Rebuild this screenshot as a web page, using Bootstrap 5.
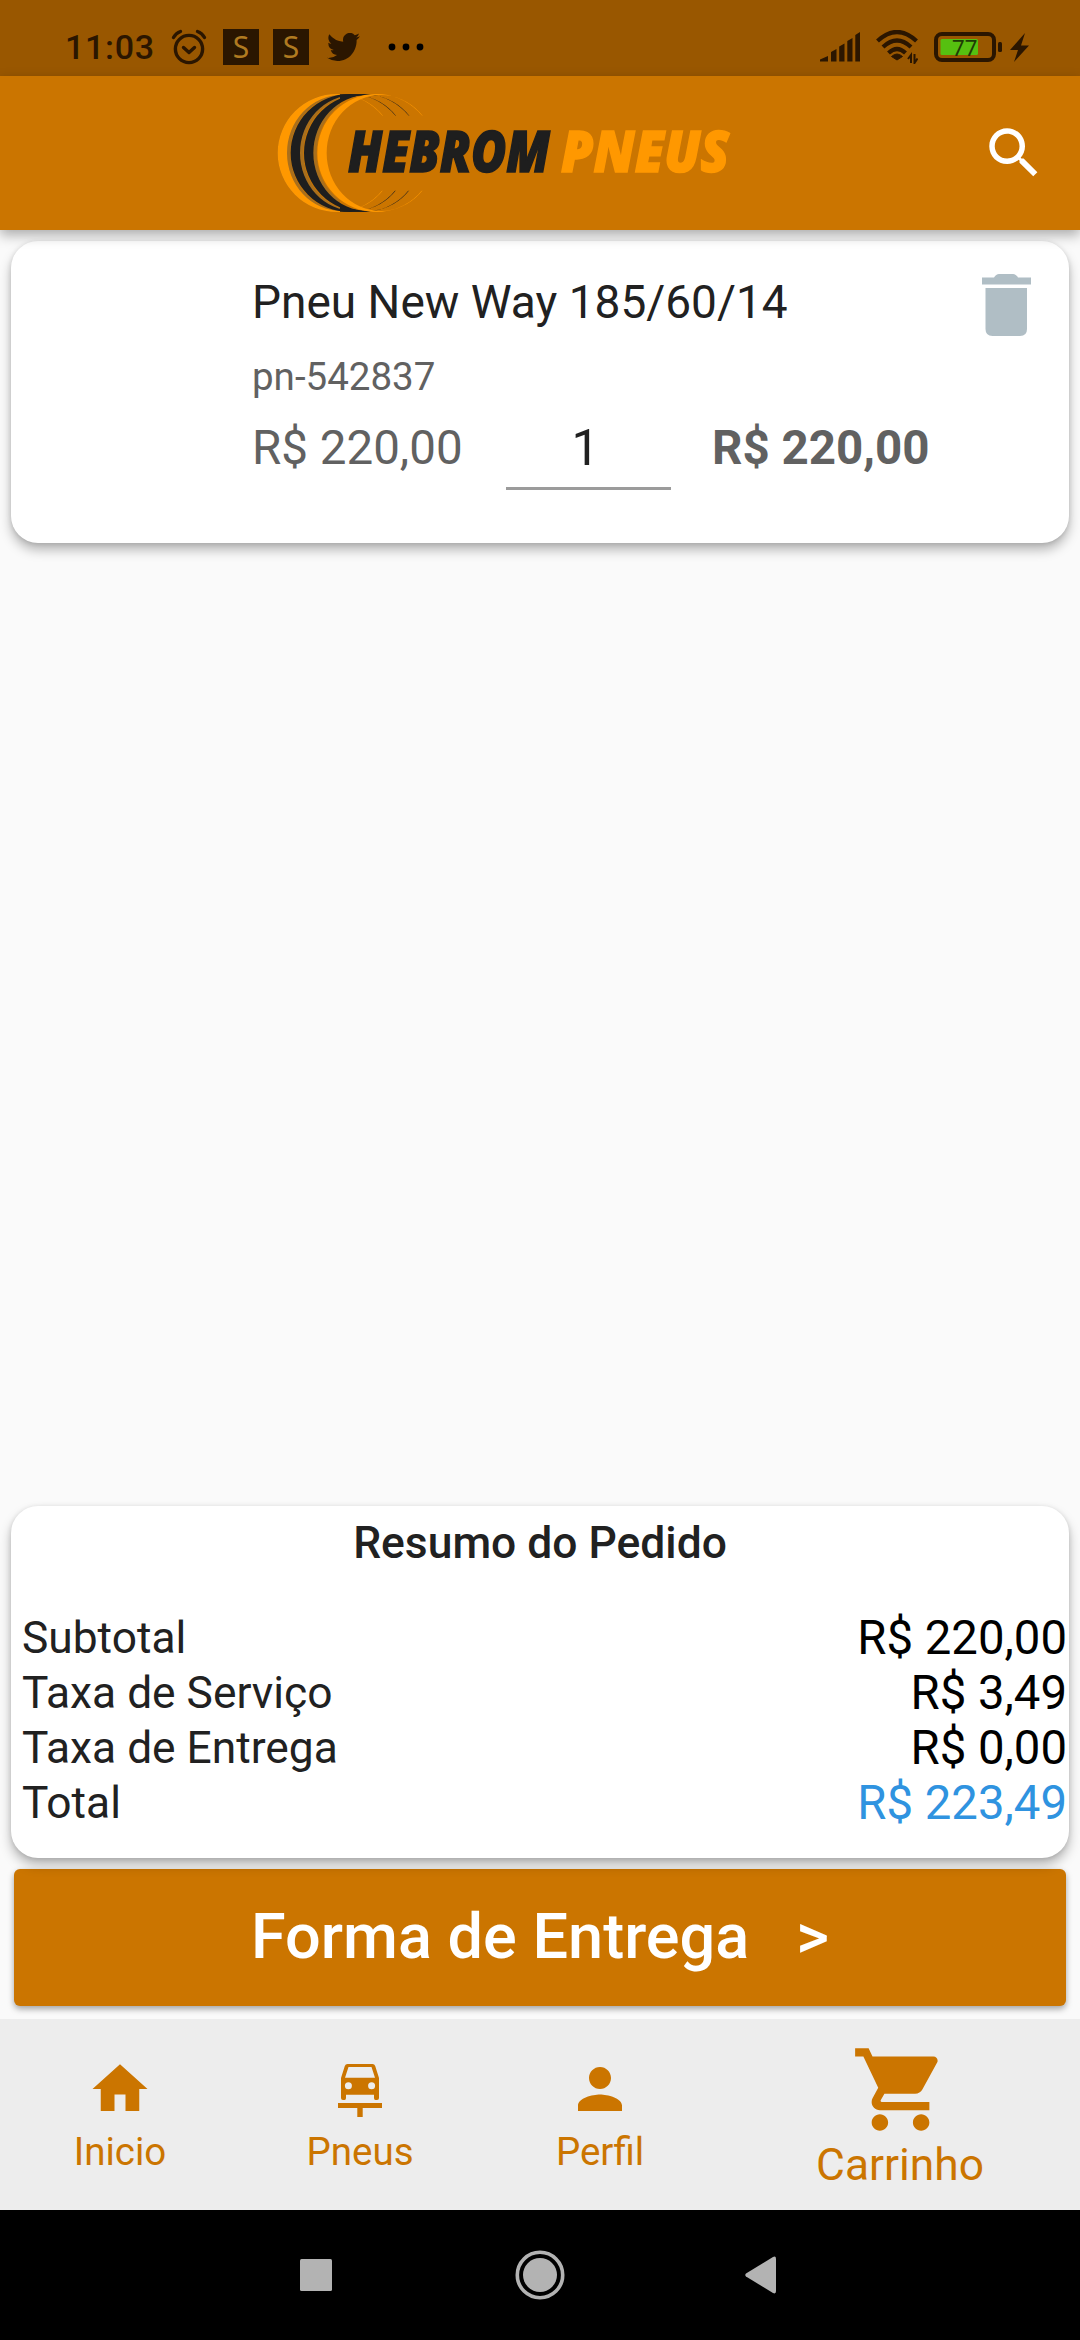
<!DOCTYPE html>
<html lang="pt-BR">
<head>
<meta charset="utf-8">
<meta name="viewport" content="width=device-width, initial-scale=1">
<title>Hebrom Pneus - Carrinho</title>
<link rel="stylesheet" href="https://cdn.jsdelivr.net/npm/bootstrap@5.3.0/dist/css/bootstrap.min.css">
<style>
  body { font-family: Roboto, sans-serif; background: #fafafa; width: 1080px; height: 2340px; overflow: hidden; color: #212121; }
  svg { display: block; flex: none; }
  .statusbar { height: 76px; background: #995700; color: #2b1600; padding: 18px 51px 0 65px; }
  .clock { font-size: 34px; font-weight: 500; line-height: 58px; letter-spacing: .7px; width: 106px; }
  .app-square { width: 36px; height: 36px; background: #2b1600; color: #b07a20; font-family: "Noto Sans", sans-serif; font-size: 30px; line-height: 36px; text-align: center; margin-right: 14px; }
  .topbar { height: 154px; background: #cb7500; padding: 0 33px 0 270px; box-shadow: 0 5px 12px rgba(0,0,0,.32); z-index: 2; }
  .wordmark { overflow: visible; }
  .panel { border: 0; border-radius: 27px; margin: 0 11px; box-shadow: 0 7px 12px rgba(0,0,0,.27), 0 1px 5px rgba(0,0,0,.12); }
  .item-card { margin-top: 11px; height: 302px; padding: 28px 38px 0 241px; }
  .item-title { font-size: 46px; line-height: 66px; }
  .item-code { font-size: 38.5px; line-height: 54px; margin-top: 14px; color: #616161; }
  .price { font-size: 47.5px; line-height: 56px; color: #616161; padding-top: 16px; }
  .unit-price { width: 254px; }
  .qty { width: 165px; height: 76px; margin: 10px 41px 0 0; padding: 0 6px 5px 0; border: 0; border-bottom: 3px solid #9b9b9b; border-radius: 0; background: none; color: #212121; font-size: 49.5px; line-height: 56px; text-align: center; }
  .summary { height: 352px; padding: 11px 2px 0 11px; }
  .summary h2 { font-size: 44.4px; font-weight: 500; line-height: 52px; margin: 0 9px 42px 0; }
  .sum-row { height: 55px; font-size: 44.3px; line-height: 55px; }
  .sum-value { font-size: 47.3px; color: #000; }
  .sum-total { color: #2f93e0; }
  .checkout { margin: 11px 14px 13px; height: 137px; padding: 0 0 2px; border: 0; border-radius: 6px; background: #cb7500; color: #fff; font-size: 63px; font-weight: 500; line-height: 135px; white-space: pre; box-shadow: 0 3px 6px rgba(0,0,0,.35); }
  .bottombar { height: 191px; background: #ededed; }
  .tab { width: 240px; padding-top: 37px; font-size: 38.5px; line-height: 46px; gap: 7px; color: #cb7500; text-decoration: none; }
  .tab-active { width: 360px; padding-top: 21px; font-size: 44.3px; line-height: 52px; gap: 0; }
  .sysbar { height: 130px; background: #000; padding-left: 300px; }
</style>
<script src="https://cdn.jsdelivr.net/npm/bootstrap@5.3.0/dist/js/bootstrap.bundle.min.js"></script>
</head>
<body class="d-flex flex-column m-0">

<div class="statusbar d-flex align-items-center flex-shrink-0">
  <div class="clock">11:03</div>
  <svg class="me-3" width="36" height="36" viewBox="0 0 36 36" fill="none" stroke="#2b1600" stroke-width="3.4" stroke-linecap="round" stroke-linejoin="round"><circle cx="18" cy="20" r="13.6"/><path d="M12.500 18.500l5.500 5 5.500-5M2.500 8.500Q5 4 9.500 2.500M33.500 8.500Q31 4 26.500 2.500"/></svg>
  <div class="app-square">S</div>
  <div class="app-square">S</div>
  <svg class="ms-1" width="33" height="28" viewBox="0 2 16 13" preserveAspectRatio="none" fill="#2b1600"><path d="M5.026 15c6.038 0 9.341-5.003 9.341-9.334 0-.14 0-.282-.006-.422A6.685 6.685 0 0 0 16 3.542a6.658 6.658 0 0 1-1.889.518 3.301 3.301 0 0 0 1.447-1.817 6.533 6.533 0 0 1-2.087.793A3.286 3.286 0 0 0 7.875 6.03a9.325 9.325 0 0 1-6.767-3.429 3.289 3.289 0 0 0 1.018 4.382A3.323 3.323 0 0 1 .64 6.575v.045a3.288 3.288 0 0 0 2.632 3.218 3.203 3.203 0 0 1-.865.115 3.23 3.23 0 0 1-.614-.057 3.283 3.283 0 0 0 3.067 2.277A6.588 6.588 0 0 1 .78 13.58a6.32 6.32 0 0 1-.78-.045A9.344 9.344 0 0 0 5.026 15z"/></svg>
  <svg width="64" height="8" viewBox="-28 0 64 8" fill="#000"><circle cx="4" cy="4" r="3.4"/><circle cx="18" cy="4" r="3.4"/><circle cx="32" cy="4" r="3.4"/></svg>
  <svg class="ms-auto" width="40" height="30" fill="#2b1600"><path d="M0 29.500V27.500L8 24V29.500ZM11 29.500V20L16.500 17V29.500ZM19.200 29.500V14.500L24.500 11.500V29.500ZM27.300 29.500V9L32.500 6V29.500ZM35.300 29.500V3L40 0V29.500Z"/></svg>
  <svg class="ms-3" width="42" height="34" fill="none" stroke="#2b1600" stroke-width="4.2"><path d="M1.500 11Q21-7 40.500 11M7 17Q21 4 35 17M12.500 23Q21 15 29.500 23"/><path d="M21 30L15.500 26.500Q21 21.500 26.500 26.500Z" fill="#2b1600" stroke-width="1"/><path d="M35 33V25L32 29M38.500 24V33L41.500 28.500" stroke-width="2"/></svg>
  <svg class="ms-3" width="69" height="30"><rect x="2" y="2" width="58" height="26" rx="6" fill="none" stroke="#2b1600" stroke-width="4"/><rect x="6.500" y="7" width="37.500" height="16" rx="1.500" fill="#56c010"/><rect x="64" y="10" width="4" height="10" rx="1.500" fill="#2b1600"/><text x="18" y="23.500" font-family="Roboto, sans-serif" font-size="22.500" fill="#1e3b05">77</text></svg>
  <svg width="26" height="29" viewBox="-7 0 26 29" fill="#2b1600"><path d="M15 0L0 17H8L4 29L19 12.500H11Z"/></svg>
</div>

<header class="topbar d-flex align-items-center justify-content-between flex-shrink-0 position-relative">
  <svg class="wordmark" width="470" height="130" viewBox="0 0 470 130" role="img" aria-label="Hebrom Pneus">
    <defs>
      <clipPath id="tyreClip"><path d="M0 0H520V107H300V332H520V450H0Z"/></clipPath>
      <clipPath id="leftHalf"><path d="M0 0H240V450H0Z"/></clipPath>
      <path id="arcWide" fill-rule="evenodd" d="M0 177A177 177 0 1 1 354 177A177 177 0 1 1 0 177ZM38 177A158 172 0 1 0 354 177A158 172 0 1 0 38 177Z"/>
      <path id="arcThin" fill-rule="evenodd" d="M0 177A177 177 0 1 1 354 177A177 177 0 1 1 0 177ZM28 177A163 174 0 1 0 354 177A163 174 0 1 0 28 177Z"/>
    </defs>
    <g transform="translate(-10 -8) scale(.33333)" clip-path="url(#tyreClip)">
      <g fill="#a96f1c" clip-path="url(#leftHalf)"><use href="#arcWide" x="53" y="42"/><use href="#arcWide" x="92" y="42"/><use href="#arcWide" x="132" y="42"/></g>
      <use href="#arcThin" x="53" y="42" fill="#ff9800"/>
      <use href="#arcThin" x="92" y="42" fill="#1e1e1e"/>
      <use href="#arcThin" x="132" y="42" fill="#1e1e1e"/>
      <path d="M240 43H315L275 51L240 60Z" fill="#1e1e1e"/>
      <path d="M240 395H315L275 387L240 378Z" fill="#1e1e1e"/>
      <use href="#arcThin" x="172" y="42" fill="#ff9800"/>
    </g>
    <g font-family="'Open Sans', sans-serif" font-size="56" font-weight="800" font-style="italic" stroke-width="1.5">
      <text x="78" y="83.500" textLength="202" lengthAdjust="spacingAndGlyphs" fill="#1e1e1e" stroke="#1e1e1e">HEBROM</text>
      <text x="291" y="83.500" textLength="168" lengthAdjust="spacingAndGlyphs" fill="#ff9800" stroke="#ff9800">PNEUS</text>
    </g>
  </svg>
  <svg width="66" height="66" viewBox="0 0 24 24" fill="#fff"><path d="M15.500 14h-.79l-.28-.27C15.410 12.590 16 11.110 16 9.500 16 5.910 13.090 3 9.500 3S3 5.910 3 9.500 5.910 16 9.500 16c1.610 0 3.090-.59 4.230-1.570l.27.28v.79l5 4.990L20.490 19l-4.990-5zm-6 0C7.010 14 5 11.990 5 9.500S7.010 5 9.500 5 14 7.010 14 9.500 11.990 14 9.500 14z"/></svg>
</header>

<main class="d-flex flex-column flex-grow-1">
  <section class="card panel item-card">
    <div class="d-flex justify-content-between">
      <div class="item-title">Pneu New Way 185/60/14</div>
      <svg width="49" height="67" viewBox="0 -5 49 67" fill="#b0bec5"><path d="M0 3.500H12Q14 0 17 0H31Q34 0 36 3.500H49V10.500H0ZM3.500 14H45V55Q45 62 38 62H10.500Q3.500 62 3.500 55Z"/></svg>
    </div>
    <div class="item-code">pn-542837</div>
    <div class="d-flex align-items-start">
      <div class="price unit-price">R$ 220,00</div>
      <input class="qty" value="1" aria-label="Quantidade">
      <div class="price fw-bold">R$ 220,00</div>
    </div>
  </section>

  <section class="card panel summary mt-auto">
    <h2 class="text-center">Resumo do Pedido</h2>
    <div class="sum-row d-flex justify-content-between"><span>Subtotal</span><span class="sum-value">R$ 220,00</span></div>
    <div class="sum-row d-flex justify-content-between"><span>Taxa de Serviço</span><span class="sum-value">R$ 3,49</span></div>
    <div class="sum-row d-flex justify-content-between"><span>Taxa de Entrega</span><span class="sum-value">R$ 0,00</span></div>
    <div class="sum-row d-flex justify-content-between"><span>Total</span><span class="sum-value sum-total">R$ 223,49</span></div>
  </section>
  <button class="btn checkout" type="button">Forma de Entrega   &gt;</button>
</main>

<nav class="bottombar d-flex flex-shrink-0">
  <a class="tab d-flex flex-column align-items-center" href="#"><svg width="66" height="66" viewBox="0 0 24 24" fill="currentColor"><path d="M10 20v-6h4v6h5v-8h3L12 3 2 12h3v8z"/></svg><span>Inicio</span></a>
  <a class="tab d-flex flex-column align-items-center" href="#"><svg width="66" height="66" viewBox="-11 -8 66 66" fill="currentColor"><path fill-rule="evenodd" d="M9.500 0H34.500Q36.500 0 37.200 2L41 14V34Q41 36 39 36H37.500Q36 36 36 34V30.700H8V34Q8 36 6.500 36H5Q3 36 3 34V14L6.800 2Q7.500 0 9.500 0ZM10.500 3L7 13.700H37L33.500 3ZM6.900 21.700a3.500 3.500 0 1 0 7 0a3.500 3.500 0 1 0-7 0ZM30.100 21.700a3.500 3.500 0 1 0 7 0a3.500 3.500 0 1 0-7 0ZM0 39H44V44H24.700V53H19.300V44H0Z"/></svg><span>Pneus</span></a>
  <a class="tab d-flex flex-column align-items-center" href="#"><svg width="66" height="66" viewBox="0 0 24 24" fill="currentColor"><path d="M12 12c2.210 0 4-1.790 4-4s-1.790-4-4-4-4 1.790-4 4 1.790 4 4 4zm0 2c-2.670 0-8 1.340-8 4v2h16v-2c0-2.660-5.330-4-8-4z"/></svg><span>Perfil</span></a>
  <a class="tab tab-active d-flex flex-column align-items-center" href="#"><svg width="99" height="99" viewBox="0 0 24 24" fill="currentColor"><path d="M7 18c-1.100 0-1.990.9-1.990 2S5.900 22 7 22s2-.9 2-2-.9-2-2-2zM1 2v2h2l3.600 7.590-1.350 2.450c-.16.28-.25.61-.25.96 0 1.100.9 2 2 2h12v-2H7.420c-.14 0-.25-.11-.25-.25l.03-.12.9-1.630h7.450c.75 0 1.410-.41 1.750-1.030l3.580-6.490c.08-.14.12-.31.12-.48 0-.55-.45-1-1-1H5.210l-.94-2H1zm16 16c-1.100 0-1.990.9-1.990 2s.89 2 1.990 2 2-.9 2-2-.9-2-2-2z"/></svg><span>Carrinho</span></a>
</nav>

<footer class="sysbar d-flex align-items-center flex-shrink-0">
  <svg width="32" height="32" fill="#b3b3b3"><rect width="32" height="32" rx="1.500"/></svg>
  <svg width="233" height="50" viewBox="-183 0 233 50"><circle cx="25" cy="25" r="22.700" fill="none" stroke="#b3b3b3" stroke-width="3.600"/><circle cx="25" cy="25" r="17" fill="#b3b3b3"/></svg>
  <svg width="211" height="38" viewBox="-180 0 211 38" fill="#b3b3b3"><path d="M28 1Q31-.5 31 3V35Q31 38.500 28 37L1 20.500Q-.5 19 1 17.500Z"/></svg>
</footer>
</body>
</html>
